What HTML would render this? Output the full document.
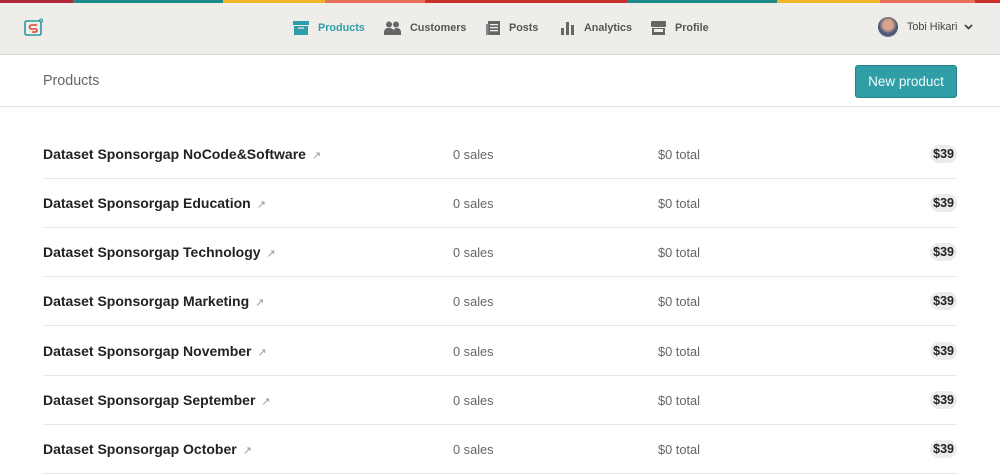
<!DOCTYPE html>
<html><head><meta charset="utf-8"><style>
*{margin:0;padding:0;box-sizing:border-box}
body{width:1000px;height:466px;overflow:hidden;background:#fff;font-family:"Liberation Sans",Arial,sans-serif;color:#222;position:relative}
.stripe{position:absolute;top:0;left:0;width:1000px;height:3px;display:flex}
.stripe div{height:3px}
.hdr{position:absolute;top:0;left:0;width:1000px;height:55px;background:#eeede9;border-bottom:1px solid #d9d9d6}
.nav{position:absolute;top:21px;font-size:10.8px;font-weight:bold;color:#555;display:flex;align-items:center}
.nav svg{margin-right:9px}
.sub{position:absolute;top:55px;left:0;width:1000px;height:52px;border-bottom:1px solid #e3e3e3}
.sub .t{position:absolute;left:43px;top:18px;font-size:14.3px;color:#666}
.btn{position:absolute;left:855px;top:10px;width:102px;height:33px;background:#2f9ea7;border:1px solid #24848c;border-radius:3px;color:#f3fbfb;font-size:13.5px;text-align:center;line-height:31px}
.row{position:absolute;left:43px;width:914px;height:49px;border-bottom:1px solid #e6e6e6}
.row .n{position:absolute;left:0;top:16px;font-size:14px;font-weight:bold;color:#222}
.row .n span{color:#999;font-size:11px;font-weight:normal;margin-left:6px}
.row .s{position:absolute;left:410px;top:17px;font-size:12.8px;color:#666}
.row .tt{position:absolute;left:615px;top:17px;font-size:12.8px;color:#666}
.row .p{position:absolute;right:0;top:15px;background:#ebebeb;border-radius:9px;padding:2px 3px;font-size:12.5px;font-weight:bold;color:#222}
</style></head><body>
<div class="hdr"></div>
<div class="stripe">
<div style="width:73px;background:#b1273a"></div><div style="width:150px;background:#1f8a8a"></div><div style="width:102px;background:#f0b429"></div><div style="width:100px;background:#e8705a"></div><div style="width:202px;background:#c9302c"></div><div style="width:150px;background:#1f8a8a"></div><div style="width:103px;background:#f0b429"></div><div style="width:95px;background:#e8705a"></div><div style="width:25px;background:#c9302c"></div>
</div>
<svg style="position:absolute;left:24px;top:18px" width="20" height="20" viewBox="0 0 20 20"><rect x="1" y="3" width="16" height="14" rx="1.5" fill="none" stroke="#2a9aa3" stroke-width="1.6"/><path d="M13 7H7.5a2 2 0 0 0 0 4h4a1.5 1.5 0 0 1 0 3H8" fill="none" stroke="#d24a3a" stroke-width="1.6"/><circle cx="17" cy="2.5" r="1.5" fill="none" stroke="#2a9aa3" stroke-width="1"/></svg>
<div class="nav" style="left:293px;color:#2f9ea7"><svg width="16" height="14" viewBox="0 0 16 14"><rect x="0" y="0" width="16" height="4" fill="#2f9ea7"/><rect x="1" y="5" width="14" height="9" fill="#2f9ea7"/><rect x="5" y="6.5" width="6" height="1.2" fill="#eeede9"/></svg>Products</div>
<div class="nav" style="left:384px"><svg width="17" height="14" viewBox="0 0 17 14"><circle cx="5" cy="3.5" r="3" fill="#666"/><circle cx="12" cy="3.5" r="3" fill="#666"/><path d="M0 14v-3a4 4 0 0 1 4-4h2a4 4 0 0 1 4 4v3zM9 14v-3a4 4 0 0 1 4-4h0a4 4 0 0 1 4 4v3z" fill="#666"/></svg>Customers</div>
<div class="nav" style="left:486px"><svg width="14" height="14" viewBox="0 0 14 14"><rect x="2" y="0" width="12" height="14" fill="#666"/><rect x="0" y="3" width="2.5" height="11" fill="#888"/><rect x="4" y="3" width="8" height="1.3" fill="#eeede9"/><rect x="4" y="6" width="8" height="1.3" fill="#eeede9"/><rect x="4" y="9" width="8" height="1.3" fill="#eeede9"/></svg>Posts</div>
<div class="nav" style="left:561px"><svg width="14" height="14" viewBox="0 0 14 14"><rect x="0" y="7" width="3" height="7" fill="#666"/><rect x="5" y="1" width="3" height="13" fill="#666"/><rect x="10" y="4" width="3" height="10" fill="#666"/></svg>Analytics</div>
<div class="nav" style="left:651px"><svg width="15" height="14" viewBox="0 0 15 14"><rect x="0" y="0" width="15" height="6" rx="1" fill="#666"/><rect x="1" y="7" width="13" height="7" fill="#666"/><rect x="3" y="8" width="9" height="3" fill="#eeede9"/></svg>Profile</div>
<div style="position:absolute;left:878px;top:17px;width:20px;height:20px;border-radius:50%;background:radial-gradient(circle at 50% 40%,#d9a48a 0 30%,#3b4f7a 60%,#c9b7a8)"></div>
<div class="nav" style="left:907px;font-weight:normal;color:#444">Tobi Hikari<svg style="margin-left:7px;margin-right:0" width="9" height="6" viewBox="0 0 9 6"><path d="M1 1l3.5 3.5L8 1" fill="none" stroke="#444" stroke-width="1.8"/></svg></div>
<div class="sub"><div class="t">Products</div><div class="btn">New product</div></div>
<div class="row" style="top:130px"><div class="n">Dataset Sponsorgap NoCode&amp;Software<span>↗</span></div><div class="s">0 sales</div><div class="tt">$0 total</div><div class="p">$39</div></div>
<div class="row" style="top:179px"><div class="n">Dataset Sponsorgap Education<span>↗</span></div><div class="s">0 sales</div><div class="tt">$0 total</div><div class="p">$39</div></div>
<div class="row" style="top:228px"><div class="n">Dataset Sponsorgap Technology<span>↗</span></div><div class="s">0 sales</div><div class="tt">$0 total</div><div class="p">$39</div></div>
<div class="row" style="top:277px"><div class="n">Dataset Sponsorgap Marketing<span>↗</span></div><div class="s">0 sales</div><div class="tt">$0 total</div><div class="p">$39</div></div>
<div class="row" style="top:327px"><div class="n">Dataset Sponsorgap November<span>↗</span></div><div class="s">0 sales</div><div class="tt">$0 total</div><div class="p">$39</div></div>
<div class="row" style="top:376px"><div class="n">Dataset Sponsorgap September<span>↗</span></div><div class="s">0 sales</div><div class="tt">$0 total</div><div class="p">$39</div></div>
<div class="row" style="top:425px"><div class="n">Dataset Sponsorgap October<span>↗</span></div><div class="s">0 sales</div><div class="tt">$0 total</div><div class="p">$39</div></div>
</body></html>
